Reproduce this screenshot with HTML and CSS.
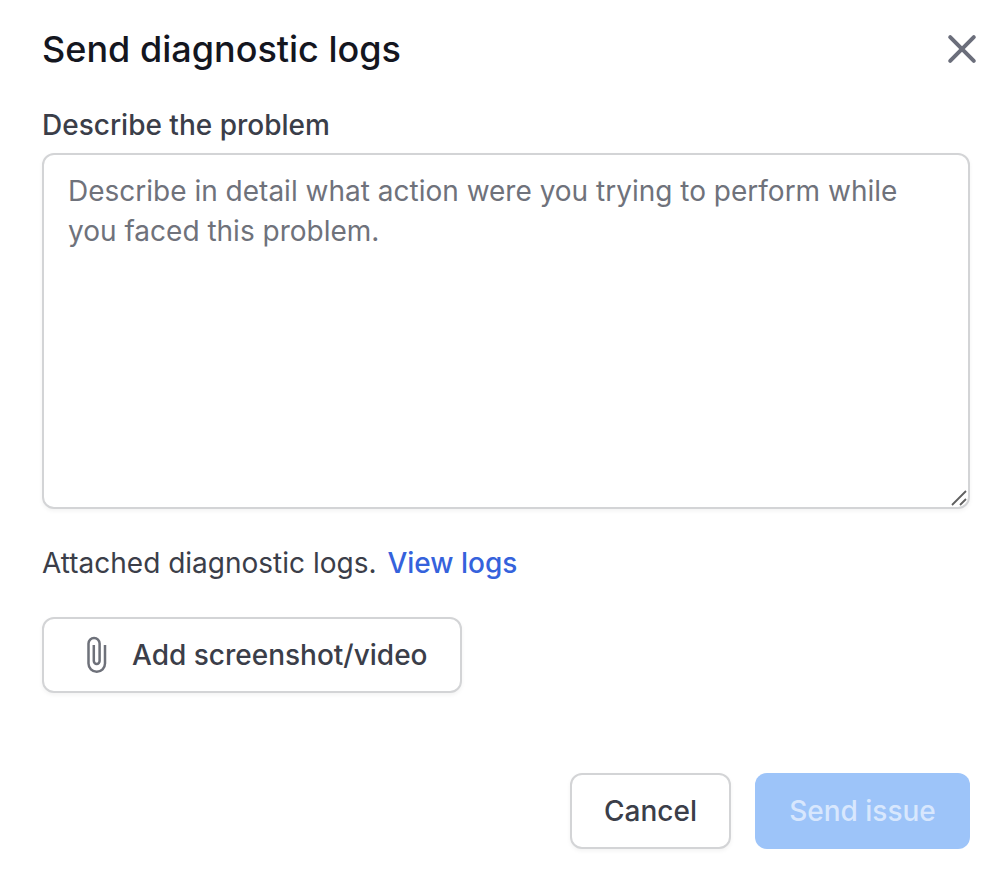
FILE: index.html
```
<!DOCTYPE html>
<html lang="en">
<head>
<meta charset="utf-8">
<title>Send diagnostic logs</title>
<link rel="stylesheet" href="styles.css">
</head>
<body>
<main class="dialog">
  <header class="header">
    <h1 class="title">Send diagnostic logs</h1>
    <button class="close" aria-label="Close"><svg width="30" height="30" viewBox="0 0 30 30" fill="none" stroke="#6b6e7b" stroke-width="4" stroke-linecap="round"><path d="M3.2 3.2l23.6 23.6M26.8 3.2L3.2 26.8"/></svg></button>
  </header>
  <label class="label" for="problem">Describe the problem</label>
  <div class="field">
    <textarea class="textarea" id="problem" placeholder="Describe in detail what action were you trying to perform while you faced this problem."></textarea>
    <svg class="grip" width="16" height="16" viewBox="0 0 16 16" fill="none" stroke="#606060" stroke-width="1.8"><path d="M1 15L15 1M9 15l6-6"/></svg>
  </div>
  <p class="logs">Attached diagnostic logs. <a class="link">View logs</a></p>
  <button class="button attach"><svg class="clip" width="22" height="38" viewBox="0 0 22 38" fill="none" stroke="#6e717a" stroke-width="2.5"><path d="M19 9v18.5a8.25 8.25 0 0 1-16.5 0V7.6a5.55 5.55 0 0 1 11.1 0V25a2.9 2.9 0 0 1-5.8 0V9"/></svg><span>Add screenshot/video</span></button>
  <footer class="footer">
    <button class="button cancel">Cancel</button>
    <button class="button send">Send issue</button>
  </footer>
</main>
</body>
</html>
```
FILE: styles.css
```
* { box-sizing: border-box; }
body { margin: 0; background: #fff; font-family: Inter, sans-serif; color: #3b3e49; }
.dialog { display: flex; flex-direction: column; align-items: flex-start; width: 1008px; height: 884px; padding: 21px 38px 0 42px; }
.header { display: flex; justify-content: space-between; align-items: center; width: 935px; height: 56px; }
.title { margin: 0; font-size: 36px; line-height: 56px; font-weight: 500; color: #14161f; white-space: nowrap; }
.close { display: flex; padding: 0; border: 0; background: none; }
.label { margin-top: 28px; height: 48px; font-size: 28px; line-height: 40px; font-weight: 500; white-space: nowrap; }
.field { position: relative; width: 928px; height: 356px; }
.textarea { display: block; width: 928px; height: 356px; padding: 16px 24px; border: 2px solid #d3d4d6; border-radius: 12px; box-shadow: 0 2px 4px rgba(0,0,0,.05); resize: none; outline: none; overflow: hidden; font: 400 28px/40px Inter, sans-serif; }
.textarea::placeholder { color: #6f727b; opacity: 1; }
.grip { position: absolute; right: 3px; bottom: 3px; }
.logs { margin: 34px 0 0; font-size: 28px; line-height: 40px; white-space: nowrap; }
.link { margin-left: 3px; color: #3562dc; font-weight: 500; }
.button { display: flex; align-items: center; justify-content: center; height: 76px; padding: 0; border: 2px solid #d3d4d6; border-radius: 12px; background: #fff; color: #3b3e49; font: 500 28px/40px Inter, sans-serif; box-shadow: 0 2px 4px rgba(0,0,0,.05); white-space: nowrap; }
.attach { margin-top: 34px; width: 420px; justify-content: flex-start; padding-left: 42px; }
.clip { margin-right: 24px; }
.footer { display: flex; justify-content: flex-end; gap: 24px; width: 928px; margin-top: 80px; }
.cancel { width: 161px; }
.send { width: 215px; border: 0; background: #9dc4f9; color: #d8e7fd; box-shadow: none; }
```
